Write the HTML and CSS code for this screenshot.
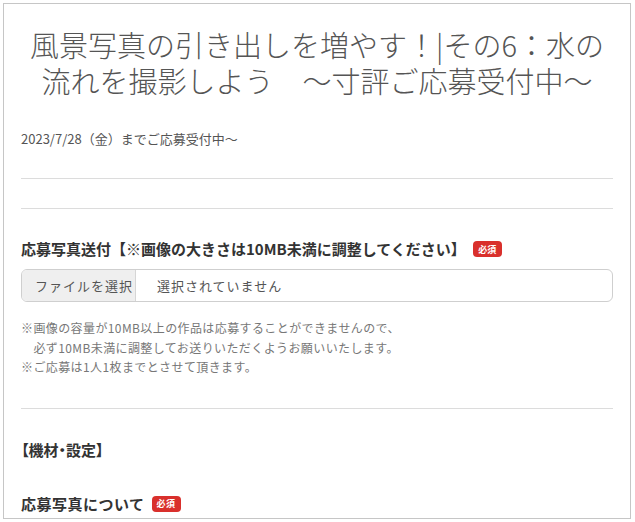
FILE: index.html
```html
<!DOCTYPE html>
<html lang="ja">
<head>
<meta charset="utf-8">
<title>風景写真の引き出しを増やす</title>
<link rel="stylesheet" href="styles.css">
</head>
<body>
<div class="page">
  <h1 class="title">風景写真の引き出しを増やす！|その6：水の<br>流れを撮影しよう　～寸評ご応募受付中～</h1>
  <p class="date">2023/7/28（金）までご応募受付中～</p>
  <hr class="rule rule-a">
  <hr class="rule rule-b">
  <div class="field field-upload">
    <div class="label">応募写真送付【※画像の大きさは10MB未満に調整してください】<span class="badge">必須</span></div>
    <div class="file">
      <span class="file-btn">ファイルを選択</span>
      <span class="file-name">選択されていません</span>
    </div>
    <p class="notes">※画像の容量が10MB以上の作品は応募することができませんので、<br>　必ず10MB未満に調整してお送りいただくようお願いいたします。<br>※ご応募は1人1枚までとさせて頂きます。</p>
  </div>
  <hr class="rule rule-c">
  <h3 class="section">【機材・設定】</h3>
  <div class="label label-last">応募写真について<span class="badge">必須</span></div>
</div>
</body>
</html>
```
FILE: styles.css
```css
html, body {
  margin: 0;
  padding: 0;
  background: #fff;
}
body {
  padding: 3px;
  font-family: "Noto Sans CJK JP", "Noto Sans", sans-serif;
  color: #333;
}
.page {
  box-sizing: border-box;
  width: 628px;
  height: 516px;
  border: 1px solid #c6c6c6;
  padding: 22px 17px 0 17px;
  overflow: hidden;
}
.title {
  margin: 0;
  font-size: 29px;
  line-height: 36px;
  font-weight: 300;
  color: #555;
  text-align: center;
  letter-spacing: 0;
}
.date {
  margin: 31px 0 0;
  font-size: 13px;
  line-height: 20px;
  color: #555;
}
.rule {
  margin: 29px 0 0;
  border: 0;
  border-top: 1px solid #dcdcdc;
  height: 0;
}
.rule-c {
  margin-top: 31px;
}
.label {
  margin-top: 29px;
  font-size: 15px;
  line-height: 22px;
  font-weight: 700;
  color: #333;
  display: flex;
  align-items: center;
}
.badge {
  display: inline-flex;
  align-items: center;
  justify-content: center;
  width: 29px;
  height: 16px;
  margin-left: 7px;
  border-radius: 4px;
  background: #d9302c;
  color: #fff;
  font-size: 9px;
  font-weight: 700;
  line-height: 1;
}
.file {
  box-sizing: border-box;
  margin-top: 9px;
  height: 33px;
  border: 1px solid #cfcfcf;
  border-radius: 6px;
  display: flex;
  overflow: hidden;
  font-size: 13px;
  letter-spacing: 1px;
}
.file-btn {
  width: 114px;
  box-sizing: border-box;
  padding-left: 13px;
  background: #efefef;
  border-right: 1px solid #d6d6d6;
  color: #555;
  display: flex;
  align-items: center;
}
.file-name {
  padding-left: 21px;
  color: #555;
  display: flex;
  align-items: center;
}
.notes {
  margin: 16px 0 0;
  font-size: 12px;
  line-height: 19.5px;
  color: #777;
  letter-spacing: 0.4px;
}
.section {
  margin: 30px 0 0;
  font-size: 15px;
  line-height: 22px;
  font-weight: 700;
  color: #333;
  font-feature-settings: "palt";
}
.label-last {
  margin-top: 32px;
  letter-spacing: 0.5px;
}
```
